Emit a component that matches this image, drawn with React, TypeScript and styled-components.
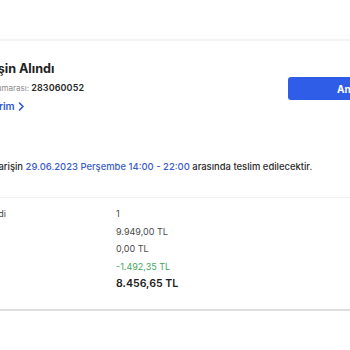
import React from 'react'
import styled, { createGlobalStyle } from 'styled-components'

const GlobalStyle = createGlobalStyle`
  html, body {
    margin: 0;
    padding: 0;
    background: #ffffff;
    overflow: hidden;
  }
  body {
    font-family: Inter, 'Noto Sans', 'Liberation Sans', sans-serif;
    -webkit-font-smoothing: antialiased;
  }
`

const Page = styled.div`
  width: 350px;
  height: 350px;
  overflow: hidden;
  display: flex;
  flex-direction: column;
`

const TopBar = styled.div`
  height: 35px;
  border-bottom: 1px solid #fafafa;
`

const TopDivider = styled.div`
  margin-top: 3px;
  height: 2px;
  background: #f3f3f3;
`

const Header = styled.div`
  display: flex;
  align-items: flex-start;
  margin-left: -40px;
  padding-top: 19px;
`

const HeaderInfo = styled.div`
  width: 328px;
  flex-shrink: 0;
  display: flex;
  flex-direction: column;
`

const Title = styled.h1`
  margin: 0 0 0 2px;
  font-size: 12.6px;
  line-height: 18px;
  font-weight: 700;
  color: #222222;
  white-space: nowrap;
`

const OrderNo = styled.div`
  margin-top: 3px;
  font-size: 8px;
  line-height: 14px;
  color: #8a8a8a;
  white-space: nowrap;
  margin-left: 4px;

  b {
    font-size: 9px;
    font-weight: 600;
    color: #2a2a2a;
    letter-spacing: 0.1px;
  }
`

const OrdersLink = styled.a`
  margin-top: 4px;
  display: flex;
  align-items: center;
  gap: 3px;
  font-size: 10px;
  line-height: 14px;
  font-weight: 600;
  color: #2c57cf;
  text-decoration: none;
  white-space: nowrap;
  margin-left: -3px;
`

const PrimaryButton = styled.button`
  margin-top: 17px;
  height: 23px;
  width: 150px;
  flex-shrink: 0;
  border: none;
  border-radius: 3px;
  background: #2f5de8;
  color: #ffffff;
  font-family: inherit;
  font-size: 10px;
  font-weight: 700;
  text-align: left;
  padding: 0 0 0 49px;
  white-space: nowrap;
`

const Delivery = styled.p`
  margin: 47px 0 0 -16px;
  font-size: 9.45px;
  line-height: 14px;
  font-weight: 500;
  color: #2b2b2b;
  white-space: nowrap;
`

const Highlight = styled.span`
  color: #3b5dc6;
`

const Divider = styled.div<{ $tone: string; $size: number }>`
  height: ${p => p.$size}px;
  background: ${p => p.$tone};
`

const Summary = styled.div`
  display: grid;
  grid-template-columns: 153px 1fr;
  grid-auto-rows: 17.5px;
  margin-left: -37px;
  padding: 7px 0 16px;
`

const Label = styled.div`
  font-size: 9px;
  line-height: 17.5px;
  color: #4a4a4a;
  white-space: nowrap;
  margin-left: -5px;
`

const Value = styled.div<{ $tone?: string; $total?: boolean }>`
  font-size: ${p => (p.$total ? '10.6px' : '9px')};
  font-weight: ${p => (p.$total ? 600 : 400)};
  line-height: 17.5px;
  color: ${p => p.$tone || '#4a4a4a'};
  white-space: nowrap;
`

const rows = [
  { label: 'Ürün Adedi', value: '1' },
  { label: 'Tutar', value: '9.949,00 TL' },
  { label: 'Kargo', value: '0,00 TL' },
  { label: 'İndirim', value: '-1.492,35 TL', tone: '#3fa85f' },
  { label: 'Toplam', value: '8.456,65 TL', tone: '#222222', total: true }
]

const Chevron = () => (
  <svg width='7' height='9' viewBox='0 0 7 9' fill='none'>
    <path d='M1.5 1l3.5 3.5L1.5 8' stroke='#2c57cf' strokeWidth='1.6' strokeLinecap='round' strokeLinejoin='round' />
  </svg>
)

const App = () => {
  return (
    <Page>
      <GlobalStyle />
      <TopBar />
      <TopDivider />
      <Header>
        <HeaderInfo>
          <Title>Siparişin Alındı</Title>
          <OrderNo>
            Sipariş numarası: <b>283060052</b>
          </OrderNo>
          <OrdersLink href='#'>
            Siparişlerim <Chevron />
          </OrdersLink>
        </HeaderInfo>
        <PrimaryButton>Anasayfaya Dön</PrimaryButton>
      </Header>
      <Delivery>
        Siparişin <Highlight>29.06.2023 Perşembe 14:00 - 22:00</Highlight> arasında teslim edilecektir.
      </Delivery>
      <div style={{ marginTop: 23 }}>
        <Divider $tone='#f1f1f1' $size={1} />
      </div>
      <Summary>
        {rows.map(row => (
          <React.Fragment key={row.label}>
            <Label>{row.label}</Label>
            <Value $tone={row.tone} $total={row.total}>
              {row.value}
            </Value>
          </React.Fragment>
        ))}
      </Summary>
      <Divider $tone='#dedede' $size={2} />
    </Page>
  )
}

export default App
